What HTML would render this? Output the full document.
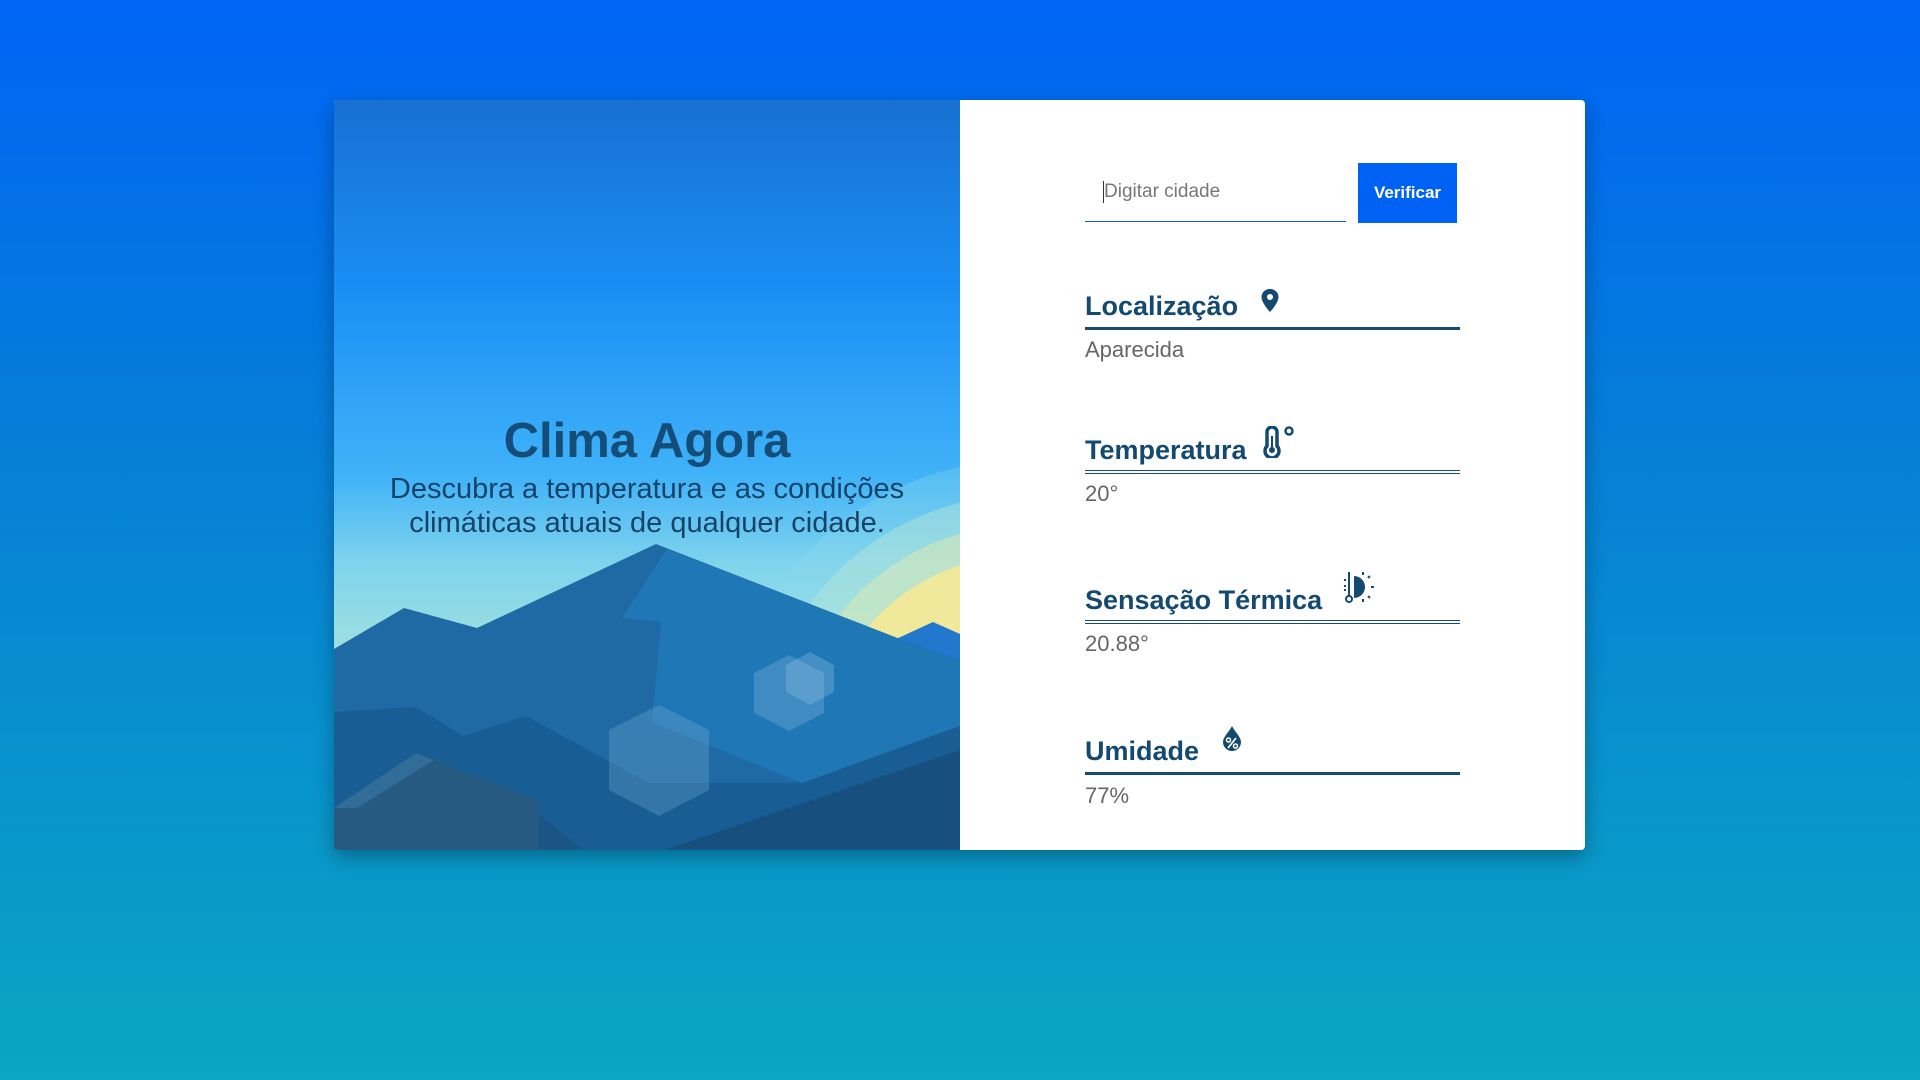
<!DOCTYPE html>
<html><head><meta charset="utf-8"><style>
*{margin:0;padding:0;box-sizing:border-box}
body{width:1920px;height:1080px;overflow:hidden;background:linear-gradient(180deg,#0064f6 0%,#067ed8 40%,#0aa6c2 100%);font-family:"Liberation Sans",Roboto,sans-serif}
.card{position:absolute;left:334px;top:100px;width:1251px;height:750px;border-radius:4px;overflow:hidden;box-shadow:0 8px 20px rgba(0,0,0,.3);background:#fff}
.left{position:absolute;left:0;top:0;width:626px;height:750px}
.title{position:absolute;left:0;width:626px;top:313px;text-align:center;font-weight:bold;font-size:49px;line-height:56px;color:#134d78}
.sub{position:absolute;left:0;width:626px;top:372px;text-align:center;font-size:29px;line-height:34px;color:#16436a}
.right{position:absolute;left:626px;top:0;width:625px;height:750px}
.inp{position:absolute;left:125px;top:60px;width:261px;height:62px;border-bottom:1.5px solid #1a5bd0;font-size:19px;color:#777;padding:20px 0 0 19px;line-height:24px}
.inp:before{content:"";position:absolute;left:18px;top:21px;width:1px;height:22px;background:#333}
.btn{position:absolute;left:398px;top:63px;width:99px;height:60px;background:#0062f5;color:#fff;font-weight:bold;font-size:17px;text-align:center;line-height:60px}
.h{position:absolute;left:125px;width:375px;color:#154a70;font-weight:bold;font-size:27px;line-height:40px;border-bottom:3px solid #1b4a70;height:44px}
.h.d{border-bottom:4px double #1b4a70}
.h svg{position:absolute}
.v{position:absolute;left:125px;font-size:22px;line-height:26px;color:#666}
</style></head><body>
<div class="card">
<div class="left">
<svg width="626" height="750" viewBox="0 0 626 750">
<defs><linearGradient id="sky" x1="0" y1="0" x2="0" y2="1">
<stop offset="0" stop-color="#1770d2"/><stop offset=".25" stop-color="#1a8ef5"/><stop offset=".5" stop-color="#40b2f8"/><stop offset=".62" stop-color="#80d4ec"/><stop offset=".8" stop-color="#b0e6d8"/><stop offset="1" stop-color="#c8ecd0"/></linearGradient></defs>
<rect width="626" height="750" fill="url(#sky)"/>
<circle cx="690" cy="660" r="300" fill="#8fdcec" opacity=".3"/>
<circle cx="690" cy="660" r="265" fill="#b7e6d6" opacity=".45"/>
<circle cx="690" cy="660" r="235" fill="#d9eab6" opacity=".55"/>
<circle cx="690" cy="660" r="205" fill="#f0e89a"/>
<polygon points="560,540 599,522 626,534 626,750 560,750" fill="#2278cc"/>
<polygon points="0,549 70,508 143,528 322,444 566,539 626,560 626,750 0,750" fill="#1f6aa5"/>
<polygon points="333,449 566,539 626,560 626,626 468,683 318,622 327,522 288,518" fill="#1f77b5"/>
<polygon points="0,612 82,607 129,636 192,616 315,683 468,683 626,626 626,750 0,750" fill="#185e94"/>
<polygon points="0,708 82,653 204,714 250,750 0,750" fill="#1a5585"/>
<polygon points="330,750 626,650 626,750" fill="#17507f"/>
<polygon points="0,708 82,653 204,700 204,750 0,750" fill="#265a80"/>
<polygon points="0,708 82,653 100,660 23,708" fill="#3a7aab" opacity=".6"/>
<polygon points="325,605 375,630 375,690 325,716 275,690 275,630" fill="#7aaed8" opacity=".3"/>
<polygon points="455,555 490,573 490,613 455,631 420,613 420,573" fill="#8bbbe0" opacity=".3"/>
<polygon points="476,552 500,565 500,592 476,605 452,592 452,565" fill="#9cc6e6" opacity=".3"/>
</svg>
<div class="title">Clima Agora</div>
<div class="sub">Descubra a temperatura e as condições<br>climáticas atuais de qualquer cidade.</div>
</div>
<div class="right">
<div class="inp">Digitar cidade</div>
<div class="btn">Verificar</div>

<div class="h" style="top:186px">Localização
<svg style="left:175px;top:2px" width="20" height="26" viewBox="0 0 20 26"><path d="M10 1C5 1 1.5 4.5 1.5 9c0 6 8.5 15 8.5 15s8.5-9 8.5-15C18.5 4.5 15 1 10 1z" fill="#154a70"/><circle cx="10" cy="9" r="3" fill="#fff"/></svg></div>
<div class="v" style="top:237px">Aparecida</div>

<div class="h d" style="top:330px">Temperatura
<svg style="left:178px;top:-4px" width="34" height="32" viewBox="0 0 34 32"><path d="M4 20V6a5 5 0 0 1 10 0v14a7 7 0 1 1-10 0z" fill="none" stroke="#154a70" stroke-width="3.5"/><circle cx="9" cy="24" r="3" fill="#154a70"/><rect x="8" y="10" width="2" height="12" fill="#154a70"/><circle cx="26" cy="5" r="3.5" fill="none" stroke="#154a70" stroke-width="2.5"/></svg></div>
<div class="v" style="top:381px">20°</div>

<div class="h d" style="top:480px">Sensação Térmica
<svg style="left:258px;top:-10px" width="32" height="36" viewBox="0 0 32 36"><g stroke="#154a70" stroke-width="2" fill="none"><path d="M6 2v24"/><circle cx="6" cy="29" r="3"/></g><path d="M11 6a11 11 0 0 1 0 22z" fill="#154a70"/><g stroke="#154a70" stroke-width="2"><path d="M20 2v3M27 6l-2 2M31 17h-3M27 28l-2-2M20 32v-3M1 10h2M1 16h2M1 20h2"/></g></svg></div>
<div class="v" style="top:531px">20.88°</div>

<div class="h" style="top:631px">Umidade
<svg style="left:136px;top:-6px" width="22" height="27" viewBox="0 0 22 27"><path d="M11 1C8 7 2 12 2 17a9 9 0 0 0 18 0C20 12 14 7 11 1z" fill="#154a70"/><circle cx="7.5" cy="15" r="2" fill="none" stroke="#fff" stroke-width="1.5"/><circle cx="14.5" cy="21" r="2" fill="none" stroke="#fff" stroke-width="1.5"/><path d="M15 13L7 23" stroke="#fff" stroke-width="1.7"/></svg></div>
<div class="v" style="top:683px">77%</div>
</div>
</div>
</body></html>
